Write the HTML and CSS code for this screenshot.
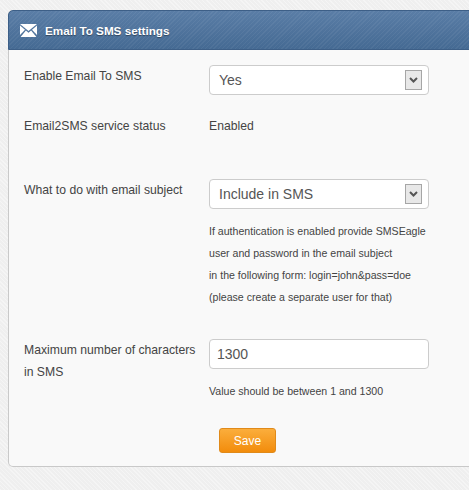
FILE: index.html
```html
<!DOCTYPE html>
<html lang="en">

<head>
    <meta charset="UTF-8">
    <title>Email To SMS settings</title>
    <link rel="stylesheet" href="styles.css">
</head>

<body>
    <div class="panel">
        <!-- Header -->
        <div class="panel-head">
            <svg class="mail-icon" width="17" height="13" viewBox="0 0 17 13">
                <path d="M0 0H17L8.5 7Z" fill="#fff"/>
                <path d="M0 1.6L5 5.8L0 11Z" fill="#fff"/>
                <path d="M17 1.6L12 5.8L17 11Z" fill="#fff"/>
                <path d="M0.6 13L5.9 6.6L8.5 8.7L11.1 6.6L16.4 13Z" fill="#fff"/>
            </svg>
            <h2>Email To SMS settings</h2>
        </div>

        <!-- Form -->
        <div class="panel-body">
            <div class="row">
                <label>Enable Email To SMS</label>
                <div class="select"><span>Yes</span><i class="arrow"><svg width="9" height="6" viewBox="0 0 9 6"><path d="M1 1L4.5 4.5L8 1" fill="none" stroke="#555" stroke-width="2"/></svg></i></div>
            </div>

            <div class="row row-status">
                <label>Email2SMS service status</label>
                <div class="value">Enabled</div>
            </div>

            <div class="row row-subject">
                <label>What to do with email subject</label>
                <div>
                    <div class="select"><span>Include in SMS</span><i class="arrow"><svg width="9" height="6" viewBox="0 0 9 6"><path d="M1 1L4.5 4.5L8 1" fill="none" stroke="#555" stroke-width="2"/></svg></i></div>
                    <p class="help">If authentication is enabled provide SMSEagle<br>user and password in the email subject<br>in the following form: login=john&amp;pass=doe<br>(please create a separate user for that)</p>
                </div>
            </div>

            <div class="row row-max">
                <label>Maximum number of characters in SMS</label>
                <div>
                    <input class="text-input" type="text" value="1300">
                    <p class="help">Value should be between 1 and 1300</p>
                </div>
            </div>

            <button class="save-btn">Save</button>
        </div>
    </div>
</body>

</html>
```

FILE: styles.css
```css
/* Global Styles */
body {
    margin: 0;
    height: 490px;
    overflow: hidden;
    font-family: "Liberation Sans", Arial, sans-serif;
    color: #444;
    background-color: #efefef;
    background-image: repeating-linear-gradient(45deg, rgba(255, 255, 255, 0.35) 0 1px, transparent 1px 3px);
    padding: 10px 0 0 8px;
    box-sizing: border-box;
}

/* Panel */
.panel {
    width: 480px;
    height: 457px;
    background: #f9f9f9;
    border: 1px solid #c9c9c9;
    border-top: 0;
    border-radius: 5px;
    box-sizing: border-box;
}

.panel-head {
    display: flex;
    align-items: center;
    height: 40px;
    margin: 0 0 0 -1px;
    padding-left: 11px;
    background:
        repeating-linear-gradient(135deg, rgba(255, 255, 255, 0.05) 0 1px, transparent 1px 3px),
        linear-gradient(to bottom, #5a7da6, #456a93);
    border: 1px solid #3d5f87;
    border-radius: 5px 5px 0 0;
    box-sizing: border-box;
}

.mail-icon {
    margin-right: 8px;
}

.panel-head h2 {
    margin: 0;
    font-size: 11.7px;
    font-weight: bold;
    color: #fff;
    text-shadow: 0 1px 1px rgba(0, 0, 0, 0.4);
}

.panel-body {
    padding: 15px 0 0 15px;
}

/* Rows */
.row {
    display: grid;
    grid-template-columns: 185px 220px;
    font-size: 12.2px;
    line-height: 22px;
}

.row label {
    display: block;
    padding-right: 8px;
}

.row-status {
    margin-top: 20px;
}

.row-subject {
    margin-top: 42px;
}

.row-max {
    margin-top: 31px;
}

/* Controls */
.select {
    display: flex;
    align-items: center;
    justify-content: space-between;
    height: 30px;
    padding: 0 6px 0 9px;
    background: #fff;
    border: 1px solid #ccc;
    border-radius: 4px;
    box-sizing: border-box;
    font-size: 14px;
    color: #555;
}

.arrow {
    display: flex;
    align-items: center;
    justify-content: center;
    width: 17px;
    height: 20px;
    background: #e8e8e8;
    border: 1px solid #a6a6a6;
    box-sizing: border-box;
}

.text-input {
    display: block;
    width: 100%;
    height: 30px;
    padding: 0 7px;
    background: #fff;
    border: 1px solid #ccc;
    border-radius: 4px;
    box-sizing: border-box;
    font-family: inherit;
    font-size: 14px;
    color: #555;
}

.help {
    margin: 11px 0 0;
    font-size: 10.6px;
    line-height: 22px;
    color: #444;
    white-space: nowrap;
}

.save-btn {
    display: block;
    width: 57px;
    height: 25px;
    margin: 26px 0 0 195px;
    padding: 0;
    background: linear-gradient(to bottom, #fbae3c, #f28c0c);
    border: 1px solid #e08a1a;
    border-radius: 3px;
    font-family: inherit;
    font-size: 12px;
    color: #fff;
}
```
